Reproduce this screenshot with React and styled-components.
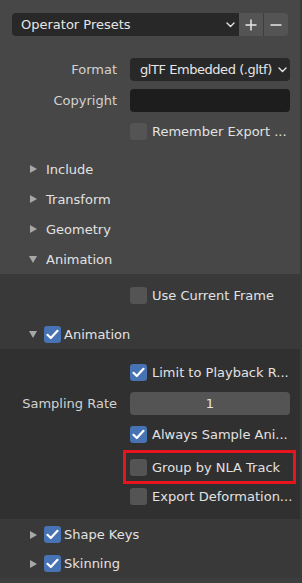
import React from "react";
import styled, { createGlobalStyle } from "styled-components";

const Global = createGlobalStyle`
  html, body { margin: 0; padding: 0; background: #3a3a3a; }
  body { font-family: "DejaVu Sans", "Liberation Sans", sans-serif; }
`;

const Root = styled.div`
  width: 302px;
  height: 583px;
  overflow: hidden;
  background: #474747;
  box-shadow: inset -2px 0 0 #3b3b3b, inset 1px 0 0 #3c3c3c;
  font-size: 13px;
  color: #dcdcdc;
  display: flex;
  flex-direction: column;
`;

const Section = styled.div`
  background: ${(p) => p.$bg};
  padding: ${(p) => p.$pad || "0"};
  display: flex;
  flex-direction: column;
  margin-right: 2px;
`;

const Spacer = styled.div`
  height: ${(p) => p.$h}px;
  flex: none;
`;

const PresetRow = styled.div`
  display: flex;
  height: 23px;
  margin: 13px 12px 0 12px;
  border-radius: 4px;
  overflow: hidden;
`;

const PresetSelect = styled.div`
  flex: 1;
  background: #282828;
  display: flex;
  align-items: center;
  padding: 0 4px 0 9px;
  justify-content: space-between;
  color: #e6e6e6;
`;

const IconButton = styled.div`
  width: 24px;
  background: #545454;
  display: flex;
  align-items: center;
  justify-content: center;
  border-left: ${(p) => (p.$sep ? "1px solid #3e3e3e" : "none")};
`;

const Row = styled.div`
  display: grid;
  grid-template-columns: 130px 160px;
  height: 31px;
  align-items: center;
`;

const Label = styled.div`
  text-align: right;
  padding-right: 13px;
  color: #d2d2d2;
  white-space: nowrap;
`;

const Field = styled.div`
  height: 23px;
  border-radius: 4px;
  background: ${(p) => p.$bg};
  display: flex;
  align-items: center;
  justify-content: ${(p) => (p.$center ? "center" : "space-between")};
  padding: ${(p) => (p.$center ? "0" : "0 3px 0 10px")};
  box-sizing: border-box;
  color: #e6e6e6;
  white-space: nowrap;
  overflow: hidden;
`;

const FieldText = styled.span`
  white-space: nowrap;
  letter-spacing: -0.45px;
  flex: none;
`;

const CheckWrap = styled.div`
  grid-column: 2;
  display: flex;
  align-items: center;
  gap: 5px;
  white-space: nowrap;
  color: #e2e2e2;
  box-sizing: border-box;
  ${(p) => (p.$highlight ? `
    margin-left: -7px;
    margin-right: -6px;
    padding-left: 4px;
    height: 34px;
    border: 3px solid #e8141e;
  ` : "")}
`;

const Box = styled.div`
  width: 17px;
  height: 17px;
  flex: none;
  border-radius: 3px;
  background: ${(p) => (p.$on ? "#4772b3" : "#545454")};
  display: flex;
  align-items: center;
  justify-content: center;
`;

const Header = styled.div`
  height: ${(p) => p.$h || 30}px;
  display: flex;
  align-items: center;
  padding-left: 29px;
  color: #e2e2e2;
`;

const Arrow = styled.span`
  width: 8px;
  display: flex;
  justify-content: center;
  margin-right: ${(p) => p.$gap}px;
`;

const HeaderText = styled.span`
  margin-left: ${(p) => p.$ml || 0}px;
`;

const Check = () => (
  <svg width="13" height="11" viewBox="0 0 13 11">
    <path d="M1.5 5.8 L4.8 9 L11.5 1.8" fill="none" stroke="#fff" strokeWidth="2.2" strokeLinecap="round" strokeLinejoin="round" />
  </svg>
);

const Checkbox = ({ on }) => <Box $on={on}>{on && <Check />}</Box>;

const Chevron = () => (
  <svg width="9" height="6" viewBox="0 0 9 6">
    <path d="M1 1 L4.5 4.5 L8 1" fill="none" stroke="#e6e6e6" strokeWidth="1.4" strokeLinecap="round" strokeLinejoin="round" />
  </svg>
);

const TriRight = () => (
  <svg width="7" height="8" viewBox="0 0 7 8">
    <path d="M0 0 L7 4 L0 8 Z" fill="#a8a8a8" />
  </svg>
);

const TriDown = () => (
  <svg width="8" height="7" viewBox="0 0 8 7">
    <path d="M0 0 L8 0 L4 7 Z" fill="#a8a8a8" />
  </svg>
);

const CheckRow = ({ on, children, highlight }) => (
  <Row>
    <CheckWrap $highlight={highlight}>
      <Checkbox on={on} />
      <span>{children}</span>
    </CheckWrap>
  </Row>
);

const PanelHeader = ({ open, children }) => (
  <Header>
    <Arrow $gap={9}>{open ? <TriDown /> : <TriRight />}</Arrow>
    <HeaderText>{children}</HeaderText>
  </Header>
);

const SubHeader = ({ open, children, h }) => (
  <Header $h={h}>
    <Arrow $gap={7}>{open ? <TriDown /> : <TriRight />}</Arrow>
    <Checkbox on />
    <HeaderText $ml={3}>{children}</HeaderText>
  </Header>
);

export default function App() {
  return (
    <>
      <Global />
      <Root>
        <Section $bg="#474747">
          <PresetRow>
            <PresetSelect>
              <span>Operator Presets</span>
              <Chevron />
            </PresetSelect>
            <IconButton>
              <svg width="12" height="12" viewBox="0 0 12 12">
                <path d="M6 0.5 V11.5 M0.5 6 H11.5" stroke="#e6e6e6" strokeWidth="1.5" />
              </svg>
            </IconButton>
            <IconButton $sep>
              <svg width="12" height="12" viewBox="0 0 12 12">
                <path d="M0.5 6 H11.5" stroke="#e6e6e6" strokeWidth="1.5" />
              </svg>
            </IconButton>
          </PresetRow>
          <Spacer $h={18} />
          <Row>
            <Label>Format</Label>
            <Field $bg="#282828">
              <FieldText>glTF Embedded (.gltf)</FieldText>
              <Chevron />
            </Field>
          </Row>
          <Row>
            <Label>Copyright</Label>
            <Field $bg="#1d1d1d" />
          </Row>
          <CheckRow>Remember Export ...</CheckRow>
          <Spacer $h={7} />
          <PanelHeader>Include</PanelHeader>
          <PanelHeader>Transform</PanelHeader>
          <PanelHeader>Geometry</PanelHeader>
          <PanelHeader open>Animation</PanelHeader>
        </Section>
        <Section $bg="#393939" $pad="6px 0 0 0">
          <CheckRow>Use Current Frame</CheckRow>
          <Spacer $h={9} />
          <SubHeader open h={29}>Animation</SubHeader>
        </Section>
        <Section $bg="#303030" $pad="8px 0 7px 0">
          <CheckRow on>Limit to Playback R...</CheckRow>
          <Row>
            <Label>Sampling Rate</Label>
            <Field $bg="#545454" $center>1</Field>
          </Row>
          <CheckRow on>Always Sample Ani...</CheckRow>
          <CheckRow highlight>Group by NLA Track</CheckRow>
          <CheckRow>Export Deformation...</CheckRow>
        </Section>
        <Section $bg="#393939" $pad="1px 0 0 0">
          <SubHeader h={29}>Shape Keys</SubHeader>
          <SubHeader h={29}>Skinning</SubHeader>
        </Section>
        <Section $bg="#3d3d3d" style={{ flex: 1 }} />
      </Root>
    </>
  );
}
